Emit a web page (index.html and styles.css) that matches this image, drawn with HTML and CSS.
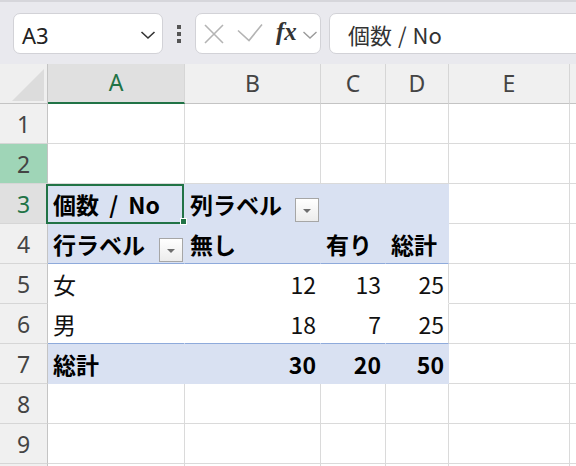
FILE: index.html
```html
<!DOCTYPE html>
<html lang="ja">
<head>
<meta charset="utf-8">
<link rel="stylesheet" href="styles.css">
</head>
<body>
<div class="toolbar">
  <div class="namebox">
    <span class="nb-text">A3</span>
    <svg class="nb-chev" width="16" height="10" viewBox="0 0 16 10"><polyline points="1.5,2 8,8 14.5,2" fill="none" stroke="#333" stroke-width="1.6"/></svg>
  </div>
  <div class="dots"><i></i><i></i><i></i></div>
  <div class="fxgroup">
    <svg class="ic-x" width="22" height="22" viewBox="0 0 22 22"><path d="M2 2 L20 20 M20 2 L2 20" stroke="#b4b4b4" stroke-width="1.6" fill="none"/></svg>
    <svg class="ic-check" width="26" height="20" viewBox="0 0 26 20"><polyline points="1,7.5 12,17.5 25,1.5" fill="none" stroke="#b4b4b4" stroke-width="1.6"/></svg>
    <span class="fx">fx</span>
    <svg class="ic-chev" width="16" height="10" viewBox="0 0 16 10"><polyline points="1.5,2 8,8 14.5,2" fill="none" stroke="#9a9a9a" stroke-width="1.4"/></svg>
  </div>
  <div class="formula">個数 / No</div>
</div>

<div class="sheet">
  <div class="corner"><svg width="48" height="40" viewBox="0 0 48 40"><polygon points="12,37 44,37 44,5" fill="#dcdcdc"/></svg></div>
  <div class="hd sel">A</div>
  <div class="hd">B</div>
  <div class="hd">C</div>
  <div class="hd">D</div>
  <div class="hd">E</div>
  <div class="hd last"></div>

  <div class="rh">1</div>
  <div class="c"></div><div class="c"></div><div class="c"></div><div class="c"></div><div class="c"></div><div class="c"></div>

  <div class="rh hl">2</div>
  <div class="c"></div><div class="c"></div><div class="c"></div><div class="c"></div><div class="c"></div><div class="c"></div>

  <div class="rh cur">3</div>
  <div class="c pv b active">個数 / No<span class="handle"></span></div>
  <div class="c pv b">列ラベル<span class="dd"><svg width="10" height="6" viewBox="0 0 10 6"><polygon points="1,1 9,1 5,5" fill="#6e6e6e"/></svg></span></div>
  <div class="c pv"></div>
  <div class="c pv edge"></div>
  <div class="c"></div><div class="c"></div>

  <div class="rh">4</div>
  <div class="c pv b sep">行ラベル<span class="dd"><svg width="10" height="6" viewBox="0 0 10 6"><polygon points="1,1 9,1 5,5" fill="#6e6e6e"/></svg></span></div>
  <div class="c pv b sep">無し</div>
  <div class="c pv b sep">有り</div>
  <div class="c pv b sep edge">総計</div>
  <div class="c"></div><div class="c"></div>

  <div class="rh">5</div>
  <div class="c pw">女</div>
  <div class="c pw num">12</div>
  <div class="c pw num">13</div>
  <div class="c pw num edgew">25</div>
  <div class="c"></div><div class="c"></div>

  <div class="rh">6</div>
  <div class="c pw sep">男</div>
  <div class="c pw num sep">18</div>
  <div class="c pw num sep">7</div>
  <div class="c pw num sep edgew">25</div>
  <div class="c"></div><div class="c"></div>

  <div class="rh">7</div>
  <div class="c pv b">総計</div>
  <div class="c pv b num">30</div>
  <div class="c pv b num">20</div>
  <div class="c pv b num edge">50</div>
  <div class="c"></div><div class="c"></div>

  <div class="rh">8</div>
  <div class="c"></div><div class="c"></div><div class="c"></div><div class="c"></div><div class="c"></div><div class="c"></div>

  <div class="rh">9</div>
  <div class="c"></div><div class="c"></div><div class="c"></div><div class="c"></div><div class="c"></div><div class="c"></div>

  <div class="rh"></div>
  <div class="c"></div><div class="c"></div><div class="c"></div><div class="c"></div><div class="c"></div><div class="c"></div>
</div>
</body>
</html>
```
FILE: styles.css
```css
* { box-sizing: border-box; }
html, body { margin: 0; padding: 0; }
body {
  width: 576px;
  height: 466px;
  overflow: hidden;
  background: #fff;
  font-family: "Noto Sans CJK JP", "Noto Sans", sans-serif;
}

.toolbar {
  height: 64px;
  background: #e9e9ee;
  border-top: 2px solid #d6d6db;
  display: flex;
  align-items: flex-start;
  padding: 11px 0 0 13px;
  overflow: hidden;
}
.namebox {
  width: 150px;
  height: 41px;
  background: #fff;
  border: 1px solid #d2d2d7;
  border-radius: 7px;
  display: flex;
  align-items: center;
  padding: 0 6px 0 8px;
  flex: none;
}
.nb-text {
  flex: 1;
  font-family: "Noto Sans", sans-serif;
  font-size: 22px;
  color: #222;
  padding-top: 2px;
}
.nb-chev { margin-top: 2px; }
.dots {
  width: 32px;
  height: 41px;
  display: flex;
  flex-direction: column;
  align-items: center;
  justify-content: center;
  gap: 3px;
  flex: none;
}
.dots i {
  display: block;
  width: 4px;
  height: 4px;
  background: #555;
}
.fxgroup {
  width: 126px;
  height: 41px;
  background: #fff;
  border: 1px solid #d2d2d7;
  border-radius: 7px;
  display: flex;
  align-items: center;
  padding-left: 7px;
  flex: none;
}
.ic-x { margin-top: 1px; }
.ic-check { margin-left: 12px; margin-top: -2px; }
.fx {
  font-family: "Liberation Serif", serif;
  font-style: italic;
  font-weight: bold;
  font-size: 25px;
  color: #333;
  margin-left: 13px;
  margin-top: -3px;
}
.ic-chev { margin-left: 5px; margin-top: 2px; }
.formula {
  flex: 1;
  margin-left: 8px;
  margin-right: -12px;
  height: 41px;
  background: #fff;
  border: 1px solid #d2d2d7;
  border-radius: 7px;
  padding-left: 18px;
  display: flex;
  align-items: center;
  font-size: 22px;
  word-spacing: 1px;
  color: #333;
}

.sheet {
  display: grid;
  grid-template-columns: 48px 137px 136px 65px 63px 121px 1fr;
  grid-auto-rows: 40px;
}
.corner {
  background: #efefef;
  border-right: 1px solid #c4c4c4;
  border-bottom: 1px solid #c4c4c4;
}
.corner svg { display: block; }
.hd {
  background: #f0f0f0;
  border-right: 1px solid #d6d6d6;
  border-bottom: 1px solid #c4c4c4;
  display: flex;
  align-items: center;
  justify-content: center;
  font-family: "Noto Sans", sans-serif;
  font-size: 23px;
  color: #444;
  padding-bottom: 2px;
}
.hd.sel {
  background: #e0e0e0;
  color: #217346;
  border-bottom: 2px solid #217346;
}
.rh {
  background: #f0f0f0;
  border-right: 1px solid #c4c4c4;
  border-bottom: 1px solid #d6d6d6;
  display: flex;
  align-items: center;
  justify-content: center;
  font-family: "Noto Sans", sans-serif;
  font-size: 23px;
  color: #444;
}
.rh.hl { background: #9fd5b7; }
.rh.cur { background: #e0e0e0; color: #217346; }

.c {
  border-right: 1px solid #dadada;
  border-bottom: 1px solid #dadada;
  display: flex;
  align-items: center;
  padding: 0 5px 0 5px;
  font-size: 23px;
  word-spacing: 5px;
  color: #111;
  white-space: nowrap;
}
.c.pv {
  background: #d9e1f2;
  border-color: transparent;
}
.c.pw {
  border-color: transparent;
}
.c.pv.edge { border-right-color: transparent; }
.c.pw.edgew { border-right-color: #dadada; }
.c.sep { border-bottom-color: #8eaadb; }
.c.b { font-weight: bold; color: #000; }
.c.num { justify-content: flex-end; padding-right: 4px; }

.active { position: relative; }
.active::after {
  content: "";
  position: absolute;
  left: -2px;
  top: 0;
  right: 0;
  bottom: -1px;
  border: 2px solid #217346;
}
.handle {
  position: absolute;
  right: -3px;
  bottom: -2px;
  width: 7px;
  height: 7px;
  background: #217346;
  border: 1px solid #fff;
  z-index: 2;
}

.dd {
  margin-left: auto;
  align-self: flex-end;
  margin-bottom: 1px;
  width: 24px;
  height: 24px;
  border: 1px solid #a6a6a6;
  background: linear-gradient(#ffffff, #ececec);
  display: flex;
  align-items: center;
  justify-content: center;
  margin-right: -4px;
}
.dd svg { display: block; margin-top: 1px; }
```
